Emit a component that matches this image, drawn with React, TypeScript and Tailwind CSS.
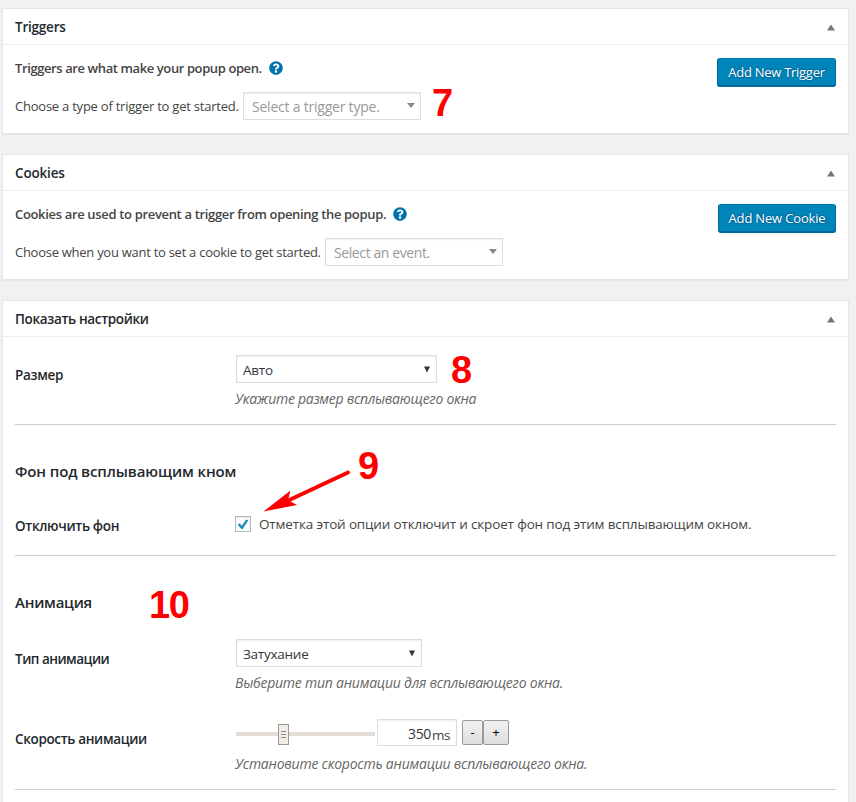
import type { ReactNode } from "react";
import { FaQuestionCircle } from "react-icons/fa";

const Panel = ({ title, tracking, className, children }: { title: string; tracking: string; className: string; children: ReactNode }) => (
  <section className={`w-[847px] border border-[#e5e5e5] bg-white shadow-[0_1px_1px_rgba(0,0,0,0.04)] ${className}`}>
    <header className="flex h-9 items-center justify-between border-b border-[#eeeeee] pr-[13px] pl-3">
      <h2 className={`leading-5 font-semibold text-[#23282d] ${tracking}`}>{title}</h2>
      <svg className="mt-[2px] h-[7px] w-2 text-[#72777c]" viewBox="0 0 8 7" fill="currentColor">
        <path d="M4 0.500 8 6.500H0z" />
      </svg>
    </header>
    {children}
  </section>
);

const PrimaryButton = ({ label, className }: { label: string; className: string }) => (
  <button className={`h-[29px] rounded-[3px] border border-[#006799] border-t-[#0073aa] bg-[#0085ba] text-[13px] whitespace-nowrap text-white shadow-[inset_0_-1px_0_#006799] [text-shadow:0_-1px_1px_#006799,1px_0_1px_#006799,0_1px_1px_#006799] ${className}`}>
    {label}
  </button>
);

const PlaceholderSelect = ({ text, tracking }: { text: string; tracking: string }) => (
  <div className="flex h-7 w-[178px] items-center justify-between border border-[#dddddd] bg-white pr-[5px] pl-2 text-[#999999] shadow-[inset_0_1px_2px_rgba(0,0,0,0.07)]">
    <span className={`mt-[2px] text-[14px] leading-5 whitespace-nowrap ${tracking}`}>{text}</span>
    <svg className="-mt-px h-[5px] w-2 text-[#888888]" viewBox="0 0 8 5" fill="currentColor">
      <path d="M0 0h8L4 5z" />
    </svg>
  </div>
);

const SelectBox = ({ text, className }: { text: string; className: string }) => (
  <div className={`flex h-7 items-center justify-between border border-[#dddddd] bg-white pr-[6px] pl-[6px] text-[#32373c] shadow-[inset_0_1px_2px_rgba(0,0,0,0.07)] ${className}`}>
    <span className="mt-px text-[13.5px] leading-5 tracking-[-0.25px]">{text}</span>
    <svg className="h-[7px] w-[6px]" viewBox="0 0 6 7" fill="currentColor">
      <path d="M0 0.500h6L3 6.500z" />
    </svg>
  </div>
);

const Intro = ({ text, tracking }: { text: string; tracking: string }) => (
  <div className="flex h-5 items-center gap-[7px]">
    <strong className={`text-[13px] leading-5 font-semibold whitespace-nowrap text-[#444444] ${tracking}`}>{text}</strong>
    <FaQuestionCircle className="h-[14px] w-[14px] text-[#0073aa]" />
  </div>
);

const FieldLabel = ({ text, className }: { text: string; className: string }) => (
  <label className={`w-[220px] shrink-0 text-[13.5px] leading-5 font-semibold text-[#23282d] ${className}`}>{text}</label>
);

const Hint = ({ text, className }: { text: string; className: string }) => (
  <p className={`text-[14px] leading-5 whitespace-nowrap text-[#666666] italic ${className}`}>{text}</p>
);

const Mark = ({ n, className }: { n: number; className: string }) => (
  <span className={`absolute font-['Liberation_Sans',sans-serif] text-[38px] leading-none font-bold tracking-[-1.5px] text-[#ff0000] ${className}`}>{n}</span>
);

const App = () => (
  <div className="relative h-[802px] w-[856px] overflow-hidden bg-[#f1f1f1] pt-2 pl-[2px] font-['Open_Sans',sans-serif] text-[#444444]">
    <Panel title="Triggers" tracking="text-[13.5px] tracking-[-0.22px]" className="h-[126px]">
      <div className="flex items-start justify-between pt-[13px] pr-3 pl-3">
        <div>
          <Intro text="Triggers are what make your popup open." tracking="tracking-[-0.4px]" />
          <div className="mt-[14px] flex items-center gap-1">
            <span className="mt-[2px] w-[224px] text-[13px] whitespace-nowrap tracking-[-0.23px]">Choose a type of trigger to get started.</span>
            <PlaceholderSelect text="Select a trigger type." tracking="tracking-[-0.22px]" />
          </div>
        </div>
        <PrimaryButton label="Add New Trigger" className="w-[119px] tracking-[-0.27px]" />
      </div>
    </Panel>

    <Panel title="Cookies" tracking="text-[13.5px] tracking-[-0.18px]" className="mt-5 h-[126px]">
      <div className="flex items-start justify-between pt-[13px] pr-3 pl-3">
        <div>
          <Intro text="Cookies are used to prevent a trigger from opening the popup." tracking="tracking-[-0.335px]" />
          <div className="mt-[14px] flex items-center gap-1">
            <span className="mt-[2px] w-[306px] text-[13px] whitespace-nowrap tracking-[-0.27px]">Choose when you want to set a cookie to get started.</span>
            <PlaceholderSelect text="Select an event." tracking="tracking-[-0.4px]" />
          </div>
        </div>
        <PrimaryButton label="Add New Cookie" className="w-[118px] tracking-[-0.17px]" />
      </div>
    </Panel>

    <Panel title="Показать настройки" tracking="text-[13.5px] tracking-[-0.35px]" className="mt-5 h-[540px]">
      <div className="px-3">
        <div className="flex h-[88px] items-start border-b border-[#cccccc] pt-[18px]">
          <FieldLabel text="Размер" className="mt-[10px] tracking-[-0.33px]" />
          <div>
            <SelectBox text="Авто" className="ml-px w-[201px]" />
            <Hint text="Укажите размер всплывающего окна" className="mt-[6px] tracking-[-0.27px]" />
          </div>
        </div>

        <h3 className="mt-[34px] text-[15px] leading-6 font-semibold tracking-[-0.12px] text-[#23282d]">Фон под всплывающим кном</h3>
        <div className="mt-[21px] flex h-[52px] items-start border-b border-[#cccccc]">
          <FieldLabel text="Отключить фон" className="mt-[12px] tracking-[-0.33px]" />
          <div className="mt-[12px] flex h-4 items-center gap-2">
            <span className="flex h-4 w-4 items-center justify-center border border-[#b4b9be] bg-white shadow-[inset_0_1px_2px_rgba(0,0,0,0.1)]">
              <svg className="h-[11px] w-[12px] shrink-0 text-[#1e8cbe]" viewBox="0 0 12 11" fill="currentColor">
                <path d="M0.600 5.700 2.700 4.300 4.800 6.700 9 0.800 11.500 1 5.500 10.200 4.600 10.300z" />
              </svg>
            </span>
            <span className="text-[13.5px] leading-5 tracking-[-0.155px] whitespace-nowrap">Отметка этой опции отключит и скроет фон под этим всплывающим окном.</span>
          </div>
        </div>

        <h3 className="mt-[34px] text-[15px] leading-6 font-semibold tracking-[-0.25px] text-[#23282d]">Анимация</h3>
        <div className="mt-[25px] flex h-[80px] items-start">
          <FieldLabel text="Тип анимации" className="mt-[10px] tracking-[-0.5px]" />
          <div>
            <SelectBox text="Затухание" className="ml-px w-[186px]" />
            <Hint text="Выберите тип анимации для всплывающего окна." className="mt-[6px] tracking-[-0.23px]" />
          </div>
        </div>
        <div className="flex h-[71px] items-start border-b border-[#cccccc]">
          <FieldLabel text="Скорость анимации" className="mt-[10px] tracking-[-0.35px]" />
          <div>
            <div className="ml-px flex h-7 items-start">
              <div className="relative mt-[13px] h-1 w-[139px] bg-[#e2ded6]">
                <span className="absolute -top-2 left-[42px] flex h-[21px] w-[11px] flex-col items-center justify-center gap-[2px] border border-[#a0978c] bg-[#f0ece8]">
                  <i className="h-px w-[5px] bg-[#948a80]" />
                  <i className="h-px w-[5px] bg-[#948a80]" />
                  <i className="h-px w-[5px] bg-[#948a80]" />
                </span>
              </div>
              <div className="ml-[2px] flex h-[27px] w-20 items-center justify-end border border-[#dddddd] pr-[6px] text-[14px] text-[#32373c] shadow-[inset_0_1px_2px_rgba(0,0,0,0.07)]">
                <span className="mt-px tracking-[-0.3px]">350</span>
                <span className="mt-[5px] ml-px text-[13.5px] tracking-[-0.5px] text-[#444444]">ms</span>
              </div>
              <button className="mt-px ml-[5px] h-[25px] w-[21px] rounded-[2px] border border-[#999999] bg-linear-to-b from-[#f2f2f2] to-[#dddddd] text-[13px] text-black">-</button>
              <button className="mt-px h-[25px] w-[26px] rounded-[2px] border border-[#999999] bg-linear-to-b from-[#f2f2f2] to-[#dddddd] text-[13px] text-black">+</button>
            </div>
            <Hint text="Установите скорость анимации всплывающего окна." className="mt-[7px] tracking-[-0.23px]" />
          </div>
        </div>
      </div>
    </Panel>

    {/* step marks over the form */}
    <Mark n={7} className="top-[84px] left-[432px]" />
    <Mark n={8} className="top-[351px] left-[451px]" />
    <Mark n={9} className="top-[447px] left-[358px]" />
    <Mark n={10} className="top-[586px] left-[149px]" />
    <svg className="absolute top-[468px] left-[260px] h-[46px] w-[94px]" viewBox="0 0 94 46">
      <path d="M88 4.500 25 34" stroke="#ff0000" strokeWidth="4" strokeLinecap="round" />
      <path d="M3.500 43.500 30.500 22.500 28 32 37 37z" fill="#ff0000" />
    </svg>
  </div>
);

export default App;
